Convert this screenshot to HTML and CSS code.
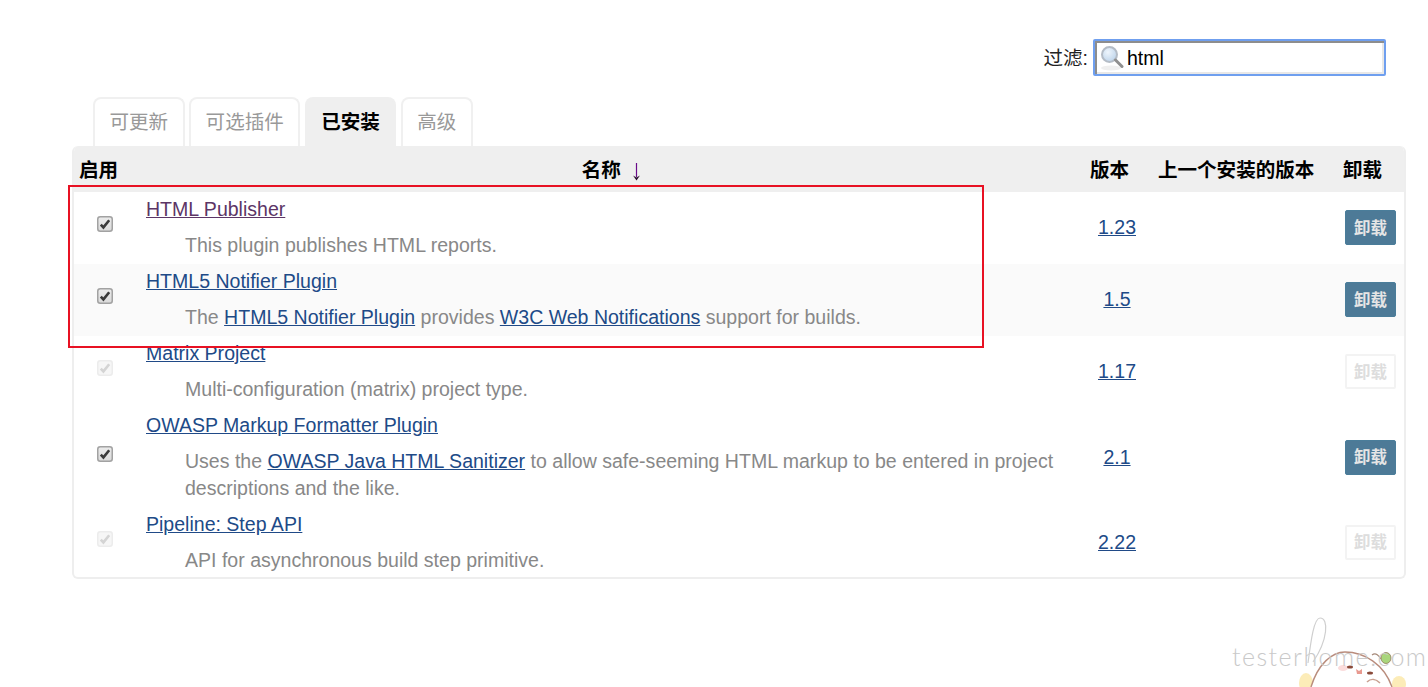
FILE: index.html
```html
<!DOCTYPE html>
<html lang="zh">
<head>
<meta charset="utf-8">
<title>插件管理</title>
<link rel="stylesheet" href="styles.css">
</head>
<body>
<svg class="defs" width="0" height="0" aria-hidden="true">
  <defs>
    <linearGradient id="boxOn" x1="0" y1="0" x2="0" y2="1"><stop offset="0" stop-color="#ececec"/><stop offset="1" stop-color="#dadada"/></linearGradient>
    <radialGradient id="lens" cx=".4" cy=".35" r=".7"><stop offset="0" stop-color="#eef5fc"/><stop offset="1" stop-color="#bcd3ea"/></radialGradient>
    <symbol id="chk-on" viewBox="0 0 16 16">
      <rect x=".75" y=".75" width="14.5" height="14.5" rx="2.5" fill="url(#boxOn)" stroke="#a2a2a2" stroke-width="1.5"/>
      <path d="M3.8 8.6 L6.4 11.4 L12.2 4.2" fill="none" stroke="#3a3a3a" stroke-width="2.6"/>
    </symbol>
    <symbol id="chk-off" viewBox="0 0 16 16">
      <rect x=".75" y=".75" width="14.5" height="14.5" rx="2.5" fill="#f6f6f6" stroke="#ececec" stroke-width="1.5"/>
      <path d="M3.8 8.6 L6.4 11.4 L12.2 4.2" fill="none" stroke="#d4d4d4" stroke-width="2.6"/>
    </symbol>
  </defs>
</svg>
<main class="page">
  <div class="filter">
    <label class="filter-label" for="q">过滤:</label>
    <div class="filter-box">
      <svg class="search-icon" width="24" height="26" viewBox="0 0 24 26" aria-hidden="true">
        <ellipse cx="11" cy="23" rx="10" ry="2.5" fill="#efefef"/>
        <circle cx="9.5" cy="9.5" r="7.5" fill="url(#lens)" stroke="#b4bcc6" stroke-width="2"/>
        <path d="M15.5 15 L22 21.5" stroke="#8f8f8f" stroke-width="3" stroke-linecap="round"/>
      </svg>
      <input id="q" class="filter-input" type="text" value="html">
    </div>
  </div>

  <nav class="tabs">
    <a class="tab">可更新</a>
    <a class="tab">可选插件</a>
    <a class="tab tab-active">已安装</a>
    <a class="tab">高级</a>
  </nav>

  <table class="plugins">
    <colgroup>
      <col class="c-on"><col class="c-name"><col class="c-ver"><col class="c-prev"><col class="c-del">
    </colgroup>
    <thead>
      <tr>
        <th>启用</th>
        <th class="th-name">名称
          <svg class="sort" width="9" height="18" viewBox="0 0 9 18" aria-hidden="true">
            <path d="M4.5 0 V14" stroke="#6a0a8a" stroke-width="1.2"/>
            <path d="M1 12.5 L4.5 17.5 L8 12.5 L4.5 14.5 Z" fill="#2a1030"/>
          </svg>
        </th>
        <th>版本</th>
        <th>上一个安装的版本</th>
        <th>卸载</th>
      </tr>
    </thead>
    <tbody>
      <tr>
        <td class="td-on"><svg class="chk"><use href="#chk-on"/></svg></td>
        <td class="td-name"><a class="visited">HTML Publisher</a><div class="desc">This plugin publishes HTML reports.</div></td>
        <td class="td-ver"><a>1.23</a></td>
        <td></td>
        <td class="td-del"><button class="btn">卸载</button></td>
      </tr>
      <tr class="alt">
        <td class="td-on"><svg class="chk"><use href="#chk-on"/></svg></td>
        <td class="td-name"><a>HTML5 Notifier Plugin</a><div class="desc">The <a>HTML5 Notifier Plugin</a> provides <a>W3C Web Notifications</a> support for builds.</div></td>
        <td class="td-ver"><a>1.5</a></td>
        <td></td>
        <td class="td-del"><button class="btn">卸载</button></td>
      </tr>
      <tr>
        <td class="td-on"><svg class="chk"><use href="#chk-off"/></svg></td>
        <td class="td-name"><a>Matrix Project</a><div class="desc">Multi-configuration (matrix) project type.</div></td>
        <td class="td-ver"><a>1.17</a></td>
        <td></td>
        <td class="td-del"><button class="btn btn-off">卸载</button></td>
      </tr>
      <tr>
        <td class="td-on"><svg class="chk"><use href="#chk-on"/></svg></td>
        <td class="td-name"><a>OWASP Markup Formatter Plugin</a><div class="desc">Uses the <a>OWASP Java HTML Sanitizer</a> to allow safe-seeming HTML markup to be entered in project descriptions and the like.</div></td>
        <td class="td-ver"><a>2.1</a></td>
        <td></td>
        <td class="td-del"><button class="btn">卸载</button></td>
      </tr>
      <tr class="last">
        <td class="td-on"><svg class="chk"><use href="#chk-off"/></svg></td>
        <td class="td-name"><a>Pipeline: Step API</a><div class="desc">API for asynchronous build step primitive.</div></td>
        <td class="td-ver"><a>2.22</a></td>
        <td></td>
        <td class="td-del"><button class="btn btn-off">卸载</button></td>
      </tr>
    </tbody>
  </table>
</main>

<div class="highlight"></div>

<svg class="watermark" width="208" height="87" viewBox="1220 600 208 87" aria-hidden="true">
  <ellipse cx="1306" cy="683" rx="7" ry="10" fill="#fcecb8"/>
  <ellipse cx="1399" cy="684" rx="7" ry="8" fill="#fcecb8"/>
  <path d="M1311 687 C1318 664 1332 652 1345 652 C1364 652 1384 664 1392 687" fill="#fff" stroke="#b98c7c" stroke-width="1.4"/>
  <path d="M1372 655 C1376 652 1379 656 1381 659" fill="none" stroke="#a58878" stroke-width="1.2"/>
  <ellipse cx="1386" cy="658" rx="5" ry="5.5" fill="#a9d67c" stroke="#8f7a5c" stroke-width=".8"/>
  <ellipse cx="1343" cy="668" rx="5" ry="3" fill="#fbdcdc"/>
  <ellipse cx="1350" cy="667" rx="3" ry="1.5" fill="#8a4a3a"/>
  <ellipse cx="1370" cy="673" rx="3" ry="1.5" fill="#8a4a3a"/>
  <path d="M1356 669 L1359 671 L1362 669 L1362 674 L1357 674 Z" fill="#e89a90"/>
  <path d="M1367 682 C1371 678 1376 679 1380 683" fill="none" stroke="#c9a090" stroke-width="1.6"/>
  <text class="wm-text" x="1232" y="666" textLength="194" lengthAdjust="spacing">testerhome.com</text>
  <path d="M1308 663 C1311 640 1314 618 1320 618 C1329 618 1328 640 1313 662" fill="none" stroke="#cfcfcf" stroke-width="1.2"/>
</svg>
</body>
</html>
```

FILE: styles.css
```css
* { box-sizing: border-box; }

html, body {
  margin: 0;
  height: 100%;
  overflow: hidden;
  background: #fff;
}

body {
  font-family: "Liberation Sans", "Noto Sans CJK SC", sans-serif;
  font-size: 19.55px;
  line-height: 27px;
  color: #333;
  position: relative;
}

.defs { position: absolute; }

.page {
  padding: 40px 22px 0 72px;
}

/* filter */
.filter {
  display: flex;
  justify-content: flex-end;
  align-items: flex-end;
  gap: 5px;
  padding-right: 20px;
  height: 36px;
}

.filter-label { color: #222; align-self: center; }

.filter-box {
  flex: none;
  width: 293px;
  height: 37px;
  display: flex;
  align-items: center;
  gap: 3px;
  padding-left: 5px;
  border: 2px solid #6f9fef;
  border-radius: 2px;
  box-shadow: inset 2px 2px 0 #8d8d8d, inset -2px -2px 0 #e8e8e8;
  background: #fff;
}

.search-icon { flex: none; }

.filter-input {
  flex: 1;
  min-width: 0;
  border: 0;
  outline: 0;
  padding: 2px 0 0;
  background: transparent;
  font: inherit;
  color: #000;
}

/* tabs */
.tabs {
  display: flex;
  gap: 4.5px;
  margin-top: 21px;
  padding-left: 21px;
  height: 49px;
}

.tab {
  padding: 10px 14.5px 0;
  border: 2px solid #f0f0f0;
  border-bottom: 0;
  border-radius: 8px 8px 0 0;
  color: #999;
}

.tab-active {
  background: #efefef;
  border-color: #efefef;
  color: #000;
  font-weight: bold;
}

/* table */
.plugins {
  width: 1334px;
  table-layout: fixed;
  border-collapse: separate;
  border-spacing: 0;
  border: 2px solid #eee;
  border-top: 0;
  border-radius: 6px;
  overflow: hidden;
}

.c-on { width: 64px; }
.c-name { width: 945px; }
.c-ver { width: 68px; }
.c-prev { width: 185px; }
.c-del { width: 68px; }

.plugins th {
  height: 46px;
  padding: 2px 0 0 7px;
  background: #efefef;
  color: #000;
  font-weight: bold;
  text-align: left;
  white-space: nowrap;
}

.plugins th:first-child { padding-left: 5px; }

.plugins th.th-name {
  padding: 2px 7px 0 9px;
  text-align: center;
}

.sort {
  margin-left: 6px;
  vertical-align: -4px;
}

.plugins td { padding: 0; vertical-align: middle; }

.alt td { background: #fafafa; }

.chk {
  display: block;
  width: 16px;
  height: 16px;
  margin: 0 0 8px 23px;
}

.plugins .td-name { padding: 4px 8px 5px; }

.td-name a, .td-ver a, .desc a {
  color: #204a87;
  text-decoration: underline;
}

.td-name a.visited { color: #5c3566; }

.desc {
  margin-top: 9px;
  padding-left: 39px;
  color: #888;
}

.plugins .td-ver {
  padding-bottom: 1px;
  text-align: center;
}

.plugins .td-del {
  padding: 0 8px .5px 0;
}

.last .chk { margin-bottom: 6px; }
.plugins .last .td-name { padding-bottom: 3px; }
.plugins .last .td-ver { padding: 1px 0 0; }
.plugins .last .td-del { padding: 1px 8px .5px 0; }

.btn {
  display: block;
  width: 51px;
  height: 35px;
  margin-left: auto;
  padding: 0;
  border: 1px solid #4a7d9a;
  border-radius: 2px;
  background: #4d7a97;
  color: #e5e5e5;
  font: bold 16.5px/1 "Liberation Sans", "Noto Sans CJK SC", sans-serif;
}

.btn-off {
  background: #fff;
  border: 2px solid #f3f3f3;
  color: #ddd;
}

/* annotation drawn over the screenshot */
.highlight {
  position: absolute;
  left: 68px;
  top: 185px;
  width: 916px;
  height: 163px;
  border: 2px solid #e81123;
  pointer-events: none;
}

.watermark {
  position: absolute;
  right: 0;
  bottom: 0;
}

.wm-text {
  font-family: "Lato", "Liberation Sans", sans-serif;
  font-weight: 300;
  font-size: 25px;
  fill: #c9c9c9;
}
```
